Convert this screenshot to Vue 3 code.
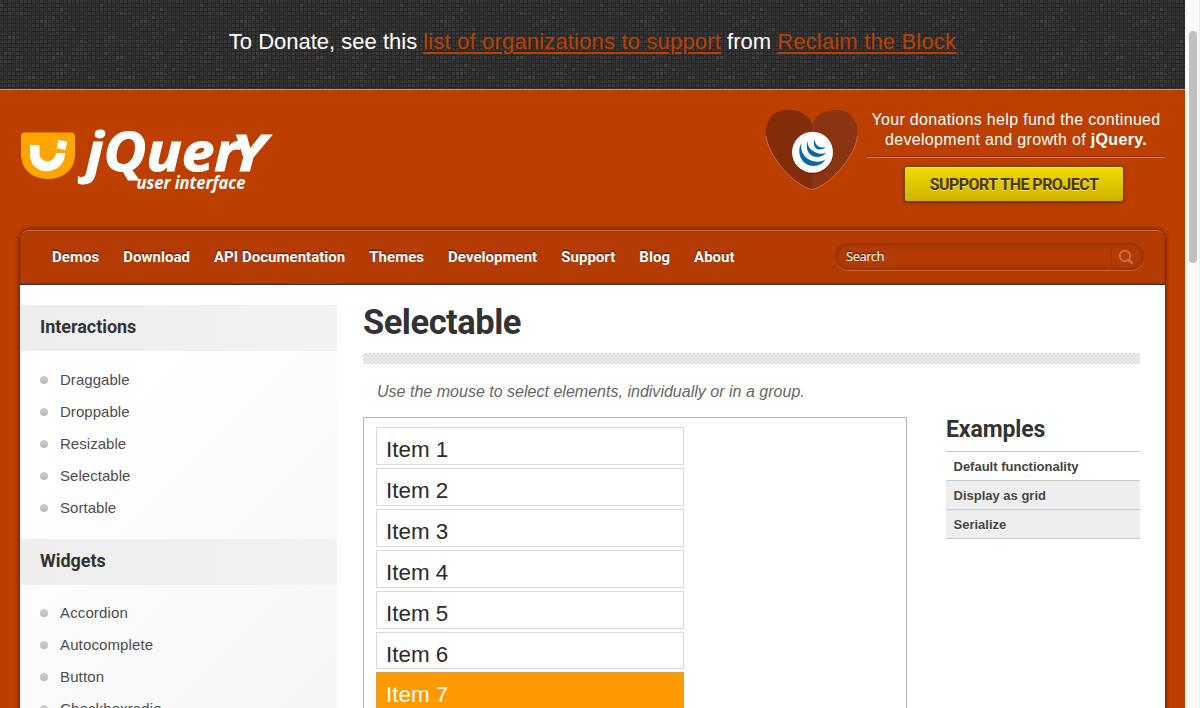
<script setup>
const navItems = ['Demos', 'Download', 'API Documentation', 'Themes', 'Development', 'Support', 'Blog', 'About']
const sections = [
  { title: 'Interactions', links: ['Draggable', 'Droppable', 'Resizable', 'Selectable', 'Sortable'] },
  { title: 'Widgets', links: ['Accordion', 'Autocomplete', 'Button', 'Checkboxradio'] },
]
const items = [1, 2, 3, 4, 5, 6, 7]
const selected = 7
const examples = ['Default functionality', 'Display as grid', 'Serialize']

// Lighter cells of the 25 x 22 woven tile, as [column, row].
const bright = [[0, 1], [10, 5], [11, 5], [4, 14], [5, 14], [18, 7], [2, 9], [3, 9], [7, 19], [8, 19], [1, 13], [14, 13], [15, 13], [4, 17], [18, 17], [14, 18], [15, 18], [22, 19], [23, 19], [13, 14], [15, 2], [5, 3], [20, 10], [16, 16], [13, 4]]
const dim = []
let seed = 11
for (let r = 0; r < 22; r++) {
  for (let c = 0; c < 25; c++) {
    seed = (seed * 1103515245 + 12345) % 2147483648
    if (seed / 2147483648 > 0.68) dim.push([c, r])
  }
}
</script>

<template>
  <div class="viewport">
    <div class="page">
      <div class="banner">
        <svg class="weave" width="1185" height="89" aria-hidden="true">
          <defs>
            <pattern id="weave" width="100" height="88" patternUnits="userSpaceOnUse">
              <rect width="100" height="88" fill="#262626" />
              <template v-for="r in 22" :key="r">
                <rect v-for="c in 25" :key="c" :x="(c - 1) * 4" :y="(r - 1) * 4" width="3" height="3" fill="#333" />
              </template>
              <rect v-for="(d, i) in dim" :key="'d' + i" :x="d[0] * 4" :y="d[1] * 4" width="3" height="3" fill="#373737" />
              <rect v-for="(d, i) in bright" :key="'b' + i" :x="d[0] * 4" :y="d[1] * 4" width="3" height="3" fill="#404040" />
            </pattern>
          </defs>
          <rect width="1185" height="89" fill="url(#weave)" />
        </svg>
        <p>To Donate, see this <a>list of organizations to support</a> from <a>Reclaim the Block</a></p>
      </div>

      <header class="header">
        <svg class="logo" width="260" height="74" viewBox="15 124 260 74">
          <path d="M25 132.500H71a4 4 0 0 1 4 4V154C75 170 63 179 48 179S21 170 21 154V136.500a4 4 0 0 1 4-4Z" fill="#ffa500" />
          <path d="M30 145h9.500v8.500c0 10 15 10.500 16.500-.5h9.300c-1.300 24-35.300 24-35.300 1.500Z" fill="#fff" />
          <path d="M58.300 139.800l9 1.900-1.900 8.300-8.700-1.800Z" fill="#fff" />
          <g class="wordmark" fill="#fff">
            <text x="86" y="171" font-size="53" textLength="153" lengthAdjust="spacingAndGlyphs">jQuer</text>
            <text class="cap" x="231" y="171" font-size="51" textLength="35" lengthAdjust="spacingAndGlyphs">y</text>
          </g>
          <text class="sub" x="136.500" y="189" font-size="18" textLength="109" lengthAdjust="spacingAndGlyphs" fill="#fff">user interface</text>
        </svg>

        <div class="donate">
          <svg class="heart" width="98" height="88" viewBox="763 106 98 88">
            <path d="M812 189.500C792 185 766 154 766 133C766 118 775 110 788 110C799 110 808 114 812 124C816 114 825 110 837 110C849 110 857.500 118 857.500 133C857.500 154 832 185 812 189.500Z" fill="#8b3414" />
            <path d="M812 189.500C792 185 766 154 766 133C766 118 775 110 788 110C799 110 808 114 812 124Z" fill="#822c09" />
            <path d="M766 136C768 156 794 186 812 189.500C830 186 855.500 156 857.500 136" fill="none" stroke="#d0694a" stroke-width="1" />
            <circle cx="812.500" cy="153.800" r="20.500" fill="#5b1c05" opacity=".6" />
            <circle cx="812.500" cy="152.300" r="20.500" fill="#fff" />
            <g fill="#0769ad">
              <path d="M801.500 143C796 152 801 165.500 813.500 166Q822 166 825.300 159.500Q820 163 812.500 161C804 158.500 799.800 151 801.500 143Z" />
              <path d="M808 141C804.500 148 808.500 156.500 816.500 157Q823 157 826 152.500Q821.500 154.700 816.500 152.800C810.500 150 807.300 147 808 141Z" />
              <path d="M814.500 139.500C812.500 144.500 815 149 819 149.500Q823.500 149.700 825.500 147Q822 148 818.500 146.500Q815 144 814.500 139.500Z" />
            </g>
          </svg>
          <div class="appeal">
            <p>Your donations help fund the continued<br>development and growth of <b>jQuery.</b></p>
            <a class="support"><span>SUPPORT THE PROJECT</span></a>
          </div>
        </div>
      </header>

      <div class="container">
        <nav class="nav">
          <ul>
            <li v-for="n in navItems" :key="n">{{ n }}</li>
          </ul>
          <div class="search">
            <span>Search</span>
            <svg width="33" height="20" viewBox="0 0 33 20">
              <path d="M.5 0V19" stroke="#993204" />
              <circle cx="14" cy="9" r="5.200" fill="none" stroke="#cb6b49" stroke-width="2" />
              <path d="M17.500 12.500L21.500 16.500" stroke="#cb6b49" stroke-width="2.600" />
            </svg>
          </div>
        </nav>

        <div class="body">
          <aside class="sidebar">
            <section v-for="s in sections" :key="s.title">
              <h3>{{ s.title }}</h3>
              <ul>
                <li v-for="l in s.links" :key="l">{{ l }}</li>
              </ul>
            </section>
          </aside>

          <main class="main">
            <h1>Selectable</h1>
            <div class="rule"></div>
            <p class="desc">Use the mouse to select elements, individually or in a group.</p>
            <div class="demo">
              <ol class="frame">
                <li v-for="i in items" :key="i" :class="{ on: i === selected }">Item {{ i }}</li>
              </ol>
              <div class="examples">
                <h2>Examples</h2>
                <ul>
                  <li v-for="(e, i) in examples" :key="e" :class="{ active: i === 0 }">{{ e }}</li>
                </ul>
              </div>
            </div>
          </main>
        </div>
      </div>
    </div>
    <div class="scrollbar"><div class="thumb"></div></div>
  </div>
</template>

<style>
html, body { margin: 0; overflow: hidden; }
</style>

<style scoped>
.viewport {
  display: flex;
  width: 1200px;
  height: 708px;
  overflow: hidden;
  font-family: "Liberation Sans", Arial, sans-serif;
  color: #333;
}
h1, h2, h3, p, ul, ol { margin: 0; padding: 0; }
ul, ol { list-style: none; }
.page { width: 1185px; height: 708px; overflow: hidden; background: #bd3f00; }
.scrollbar { width: 15px; box-sizing: border-box; background: #fafafa; border-left: 1px solid #efefef; border-right: 1px solid #ededed; }
.thumb { width: 8px; height: 232px; margin: 31px 0 0 3px; border-radius: 4px; background: #c1c1c1; }

.banner { position: relative; height: 89px; border-bottom: 1px solid #e89b1b; }
.weave { position: absolute; left: 0; top: 0; display: block; }
.banner p { position: relative; text-align: center; font-size: 22px; line-height: 26px; padding-top: 29px; color: #fff; white-space: nowrap; }
.banner a { color: #bd3f00; letter-spacing: .17px; text-decoration: underline; text-underline-offset: 3px; text-decoration-thickness: 2px; }

.header { height: 140px; display: flex; justify-content: space-between; box-sizing: border-box; padding: 16px 20px 0 15px; }
.logo { display: block; margin-top: 18px; overflow: visible; }
.wordmark { font-family: "Open Sans", sans-serif; font-weight: 700; font-style: italic; stroke: #fff; stroke-width: 1; }
.cap { text-transform: uppercase; }
.sub { font-family: "Open Sans", sans-serif; font-weight: 700; font-style: italic; }
.donate { display: flex; }
.heart { margin-right: 6px; }
.appeal { width: 298px; }
.appeal p { font-size: 16px; line-height: 20px; letter-spacing: .32px; color: #fff; text-align: center; padding: 4px 0 7px; border-bottom: 1px solid #d97a50; box-shadow: inset 0 -1px #8f2f02; white-space: nowrap; }
.support {
  display: flex; align-items: center; justify-content: center;
  width: 218px; height: 34px; margin: 8px auto 0 37px;
  border: 1px solid #6a4b00; border-radius: 3px;
  background: linear-gradient(#f0dc00, #cfb200);
  box-shadow: 0 1px 3px rgba(60, 15, 0, .6), inset 0 1px rgba(255, 255, 120, .6);
  font: 700 16px Roboto, sans-serif; letter-spacing: -.53px; color: #4e3500; text-shadow: 0 1px #f5e96a;
}
.support span { white-space: nowrap; }

.container { width: 1145px; margin-left: 20px; border-radius: 9px 9px 0 0; box-shadow: 0 0 5px rgba(50, 10, 0, .9); }
.nav {
  height: 55px; box-sizing: border-box; display: flex; justify-content: space-between; align-items: flex-start;
  padding: 12px 21px 0 32px; border-radius: 9px 9px 0 0; background: #b43c04;
  border-top: 1px solid #d2714c; border-bottom: 1px solid #333; box-shadow: inset 0 0 2px #7c2700;
}
.nav ul { display: flex; gap: 24px; padding-top: 4px; }
.nav li { font: 700 15px/20px Roboto, sans-serif; letter-spacing: .03px; color: #fff; text-shadow: 0 -1px 1px #401000; white-space: nowrap; }
.search {
  display: flex; align-items: center; justify-content: space-between; width: 309px; height: 27px; box-sizing: border-box;
  padding: 0 0 0 11px; border-radius: 14px; box-shadow: inset 0 0 6px #7c2700, 0 1px #c9623a;
  font: 13px "Noto Sans", sans-serif; letter-spacing: -.4px; color: #fff; text-shadow: 0 -1px 1px #401000;
}
.search span { padding-bottom: 2px; letter-spacing: -.5px; }

.body { display: flex; height: 500px; background: #fff; }
.sidebar { width: 317px; box-sizing: border-box; padding-top: 20px; background: linear-gradient(135deg, #fff 25%, #f4f4f4 100%); }
.sidebar h3 { height: 46px; padding-left: 20px; background: linear-gradient(90deg, #eee, #f2f2f2); font: 700 18px/44px Roboto, sans-serif; letter-spacing: -.05px; }
.sidebar ul { padding: 13px 0 14.600px 20px; }
.sidebar li { display: flex; align-items: flex-start; gap: 12px; height: 32px; font-size: 15px; line-height: 32px; letter-spacing: .04px; color: #4d4d4d; }
.sidebar section + section ul { padding-top: 12px; }
.sidebar section + section li { letter-spacing: .13px; }
.sidebar li::before { content: ""; width: 8px; height: 8px; margin-top: 12px; border-radius: 50%; background: linear-gradient(#d0d0d0, #b8b8b8); }

.main { flex: 1; padding: 0 25px 0 26px; }
.main h1 { height: 68px; font: 700 34.500px/74px Roboto, sans-serif; letter-spacing: -.5px; }
.rule { height: 11px; background: repeating-conic-gradient(#ddd 0 25%, #efefef 0 50%) 0 0 / 4px 4px; }
.desc { font-size: 16px; font-style: italic; line-height: 20px; letter-spacing: .015px; color: #666; padding: 18px 0 15px 14px; }
.demo { display: flex; justify-content: space-between; }
.frame { width: 544px; height: 400px; box-sizing: border-box; border: 1px solid #b5b5b5; padding: 9.300px 12px; }
.frame li { width: 308px; height: 37.860px; margin-bottom: 3px; box-sizing: border-box; border: 1px solid #d9d9d9; padding-left: 9px; font-size: 22.400px; line-height: 43px; color: #2b2b2b; }
.frame .on { background: #ff9900; border-color: #e0a040; color: #fff; }
.examples { width: 194px; }
.examples h2 { height: 34px; font: 700 23px/25px Roboto, sans-serif; letter-spacing: -.1px; }
.examples ul { border-top: 1px solid #c8c8c8; }
.examples li { height: 28px; line-height: 29px; padding-left: 7.500px; border-bottom: 1px solid #c8c8c8; background: #eee; font-size: 13px; font-weight: 700; color: #444; text-shadow: 0 1px #fff; }
.examples .active { background: #fff; }
</style>
